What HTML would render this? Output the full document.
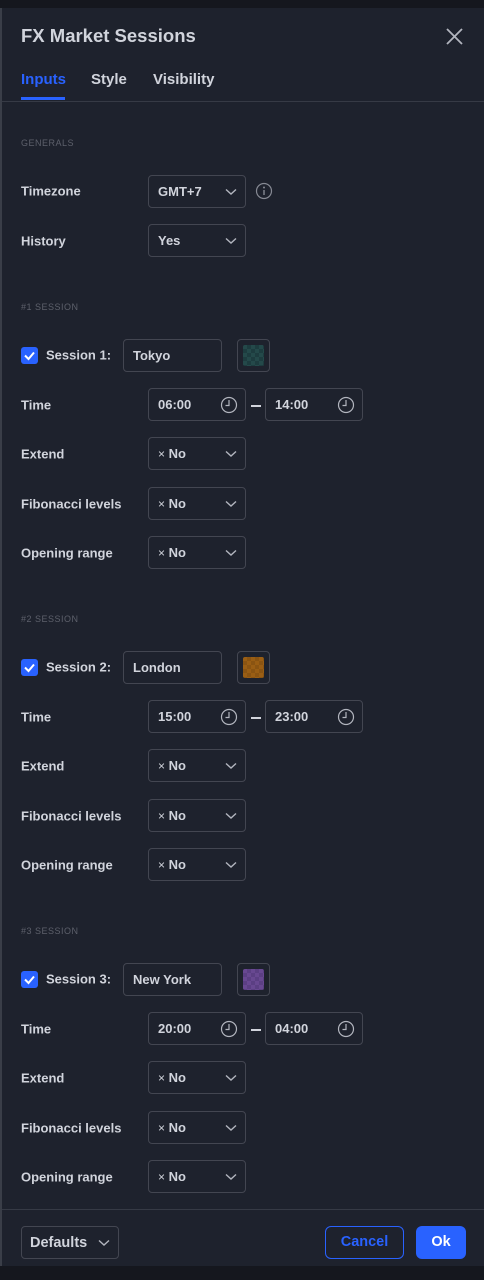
<!DOCTYPE html>
<html><head><meta charset="utf-8"><style>
*{margin:0;padding:0;box-sizing:border-box}
body{width:484px;height:1280px;background:#15171e;font-family:"Liberation Sans",sans-serif;color:#d1d4dc;position:relative;overflow:hidden}
.dlg{position:absolute;left:0;top:8px;width:484px;height:1258px;background:#1e222d;border-left:2px solid #3a3e48}
.a{position:absolute}
.t{font-size:13px;font-weight:bold;color:#d1d4dc;transform:translateY(-50%);white-space:nowrap}
.sec{font-size:9px;color:#5d606b;letter-spacing:.5px;transform:translateY(-50%)}
.box{position:absolute;border:1px solid #434651;border-radius:4px;height:33px;font-size:13px;font-weight:bold;color:#d1d4dc;padding-left:9px;line-height:31px}
.sel{width:98px}
.sel svg{position:absolute;right:8px;top:12px}
.tm{width:98px}
.tm svg{position:absolute;right:7px;top:7px}
.cb{position:absolute;left:21px;width:17px;height:17px;background:#2962ff;border-radius:3px}
.sw{position:absolute;width:33px;height:33px;border:1px solid #434651;border-radius:4px;padding:5px}
.sw div{width:100%;height:100%;border-radius:2px}
</style></head><body>
<div class="dlg">
<div class="a" style="left:19px;top:17px;font-size:18.5px;font-weight:bold;color:#d1d4dc">FX Market Sessions</div>
<svg class="a" style="left:443px;top:19px" width="19" height="19"><path d="M2 2L17 17M17 2L2 17" stroke="#b2b5be" stroke-width="1.8"/></svg>
<div class="a" style="left:19px;top:63px;font-size:15px;font-weight:bold;color:#2962ff">Inputs</div>
<div class="a" style="left:89px;top:63px;font-size:15px;font-weight:bold;color:#d1d4dc">Style</div>
<div class="a" style="left:151px;top:63px;font-size:15px;font-weight:bold;color:#d1d4dc">Visibility</div>
<div class="a" style="left:19px;top:89px;width:44px;height:3px;background:#2962ff"></div>
<div class="a" style="left:0;top:93px;width:482px;height:1px;background:#363a45"></div>
</div>
<div class="a sec" style="left:21px;top:143px">GENERALS</div>
<div class="a t" style="left:21px;top:191px">Timezone</div>
<div class="box sel" style="left:148px;top:175px">GMT+7<svg width="12" height="8"><path d="M1 1.5L6 6L11 1.5" stroke="#b2b5be" fill="none" stroke-width="1.4"/></svg></div>
<svg class="a" style="left:255px;top:182px" width="18" height="18"><circle cx="9" cy="9" r="7.5" stroke="#868993" fill="none" stroke-width="1.2"/><path d="M9 8v5" stroke="#868993" stroke-width="1.4"/><circle cx="9" cy="5.5" r="1" fill="#868993"/></svg>
<div class="a t" style="left:21px;top:241px">History</div>
<div class="box sel" style="left:148px;top:224px">Yes<svg width="12" height="8"><path d="M1 1.5L6 6L11 1.5" stroke="#b2b5be" fill="none" stroke-width="1.4"/></svg></div>

<!-- Session 1 -->
<div class="a sec" style="left:21px;top:307px">#1 SESSION</div>
<div class="cb" style="top:347px"><svg width="17" height="17"><path d="M4 8.5L7.5 12L13 5.5" stroke="#fff" fill="none" stroke-width="2"/></svg></div>
<div class="a t" style="left:46px;top:355px">Session 1:</div>
<div class="box" style="left:123px;top:339px;width:99px">Tokyo</div>
<div class="sw" style="left:237px;top:339px"><div style="background:repeating-conic-gradient(#1d3c3f 0 25%,#24494a 0 50%) 0 0/8px 8px"></div></div>
<div class="a t" style="left:21px;top:405px">Time</div>
<div class="box tm" style="left:148px;top:388px">06:00<svg width="18" height="18"><circle cx="9" cy="9" r="7.5" stroke="#b2b5be" fill="none" stroke-width="1.2"/><path d="M9 4v5.5H5.5" stroke="#b2b5be" fill="none" stroke-width="1.2"/></svg></div>
<div class="a" style="left:251px;top:405px;width:10px;height:1.5px;background:#d1d4dc"></div>
<div class="box tm" style="left:265px;top:388px">14:00<svg width="18" height="18"><circle cx="9" cy="9" r="7.5" stroke="#b2b5be" fill="none" stroke-width="1.2"/><path d="M9 4v5.5H5.5" stroke="#b2b5be" fill="none" stroke-width="1.2"/></svg></div>
<div class="a t" style="left:21px;top:454px">Extend</div>
<div class="box sel" style="left:148px;top:437px"><span style="font-weight:normal;font-size:12px">×</span> No<svg width="12" height="8"><path d="M1 1.5L6 6L11 1.5" stroke="#b2b5be" fill="none" stroke-width="1.4"/></svg></div>
<div class="a t" style="left:21px;top:504px">Fibonacci levels</div>
<div class="box sel" style="left:148px;top:487px"><span style="font-weight:normal;font-size:12px">×</span> No<svg width="12" height="8"><path d="M1 1.5L6 6L11 1.5" stroke="#b2b5be" fill="none" stroke-width="1.4"/></svg></div>
<div class="a t" style="left:21px;top:553px">Opening range</div>
<div class="box sel" style="left:148px;top:536px"><span style="font-weight:normal;font-size:12px">×</span> No<svg width="12" height="8"><path d="M1 1.5L6 6L11 1.5" stroke="#b2b5be" fill="none" stroke-width="1.4"/></svg></div>

<!-- Session 2 -->
<div class="a sec" style="left:21px;top:619px">#2 SESSION</div>
<div class="cb" style="top:659px"><svg width="17" height="17"><path d="M4 8.5L7.5 12L13 5.5" stroke="#fff" fill="none" stroke-width="2"/></svg></div>
<div class="a t" style="left:46px;top:667px">Session 2:</div>
<div class="box" style="left:123px;top:651px;width:99px">London</div>
<div class="sw" style="left:237px;top:651px"><div style="background:repeating-conic-gradient(#8a5412 0 25%,#9a5e14 0 50%) 0 0/8px 8px"></div></div>
<div class="a t" style="left:21px;top:717px">Time</div>
<div class="box tm" style="left:148px;top:700px">15:00<svg width="18" height="18"><circle cx="9" cy="9" r="7.5" stroke="#b2b5be" fill="none" stroke-width="1.2"/><path d="M9 4v5.5H5.5" stroke="#b2b5be" fill="none" stroke-width="1.2"/></svg></div>
<div class="a" style="left:251px;top:717px;width:10px;height:1.5px;background:#d1d4dc"></div>
<div class="box tm" style="left:265px;top:700px">23:00<svg width="18" height="18"><circle cx="9" cy="9" r="7.5" stroke="#b2b5be" fill="none" stroke-width="1.2"/><path d="M9 4v5.5H5.5" stroke="#b2b5be" fill="none" stroke-width="1.2"/></svg></div>
<div class="a t" style="left:21px;top:766px">Extend</div>
<div class="box sel" style="left:148px;top:749px"><span style="font-weight:normal;font-size:12px">×</span> No<svg width="12" height="8"><path d="M1 1.5L6 6L11 1.5" stroke="#b2b5be" fill="none" stroke-width="1.4"/></svg></div>
<div class="a t" style="left:21px;top:816px">Fibonacci levels</div>
<div class="box sel" style="left:148px;top:799px"><span style="font-weight:normal;font-size:12px">×</span> No<svg width="12" height="8"><path d="M1 1.5L6 6L11 1.5" stroke="#b2b5be" fill="none" stroke-width="1.4"/></svg></div>
<div class="a t" style="left:21px;top:865px">Opening range</div>
<div class="box sel" style="left:148px;top:848px"><span style="font-weight:normal;font-size:12px">×</span> No<svg width="12" height="8"><path d="M1 1.5L6 6L11 1.5" stroke="#b2b5be" fill="none" stroke-width="1.4"/></svg></div>

<!-- Session 3 -->
<div class="a sec" style="left:21px;top:931px">#3 SESSION</div>
<div class="cb" style="top:971px"><svg width="17" height="17"><path d="M4 8.5L7.5 12L13 5.5" stroke="#fff" fill="none" stroke-width="2"/></svg></div>
<div class="a t" style="left:46px;top:979px">Session 3:</div>
<div class="box" style="left:123px;top:963px;width:99px">New York</div>
<div class="sw" style="left:237px;top:963px"><div style="background:repeating-conic-gradient(#5b3f83 0 25%,#684891 0 50%) 0 0/8px 8px"></div></div>
<div class="a t" style="left:21px;top:1029px">Time</div>
<div class="box tm" style="left:148px;top:1012px">20:00<svg width="18" height="18"><circle cx="9" cy="9" r="7.5" stroke="#b2b5be" fill="none" stroke-width="1.2"/><path d="M9 4v5.5H5.5" stroke="#b2b5be" fill="none" stroke-width="1.2"/></svg></div>
<div class="a" style="left:251px;top:1029px;width:10px;height:1.5px;background:#d1d4dc"></div>
<div class="box tm" style="left:265px;top:1012px">04:00<svg width="18" height="18"><circle cx="9" cy="9" r="7.5" stroke="#b2b5be" fill="none" stroke-width="1.2"/><path d="M9 4v5.5H5.5" stroke="#b2b5be" fill="none" stroke-width="1.2"/></svg></div>
<div class="a t" style="left:21px;top:1078px">Extend</div>
<div class="box sel" style="left:148px;top:1061px"><span style="font-weight:normal;font-size:12px">×</span> No<svg width="12" height="8"><path d="M1 1.5L6 6L11 1.5" stroke="#b2b5be" fill="none" stroke-width="1.4"/></svg></div>
<div class="a t" style="left:21px;top:1128px">Fibonacci levels</div>
<div class="box sel" style="left:148px;top:1111px"><span style="font-weight:normal;font-size:12px">×</span> No<svg width="12" height="8"><path d="M1 1.5L6 6L11 1.5" stroke="#b2b5be" fill="none" stroke-width="1.4"/></svg></div>
<div class="a t" style="left:21px;top:1177px">Opening range</div>
<div class="box sel" style="left:148px;top:1160px"><span style="font-weight:normal;font-size:12px">×</span> No<svg width="12" height="8"><path d="M1 1.5L6 6L11 1.5" stroke="#b2b5be" fill="none" stroke-width="1.4"/></svg></div>

<!-- footer -->
<div class="a" style="left:2px;top:1209px;width:482px;height:1px;background:#363a45"></div>
<div class="box sel" style="left:21px;top:1226px;padding-left:8px;font-size:14.5px;line-height:33px">Defaults<svg width="12" height="8"><path d="M1 1.5L6 6L11 1.5" stroke="#b2b5be" fill="none" stroke-width="1.4"/></svg></div>
<div class="a" style="left:325px;top:1226px;width:79px;height:33px;border:1px solid #2962ff;border-radius:6px;color:#2962ff;font-size:14.5px;font-weight:bold;text-align:center;line-height:31px">Cancel</div>
<div class="a" style="left:416px;top:1226px;width:50px;height:33px;background:#2962ff;border-radius:6px;color:#fff;font-size:14.5px;font-weight:bold;text-align:center;line-height:33px">Ok</div>
</body></html>
